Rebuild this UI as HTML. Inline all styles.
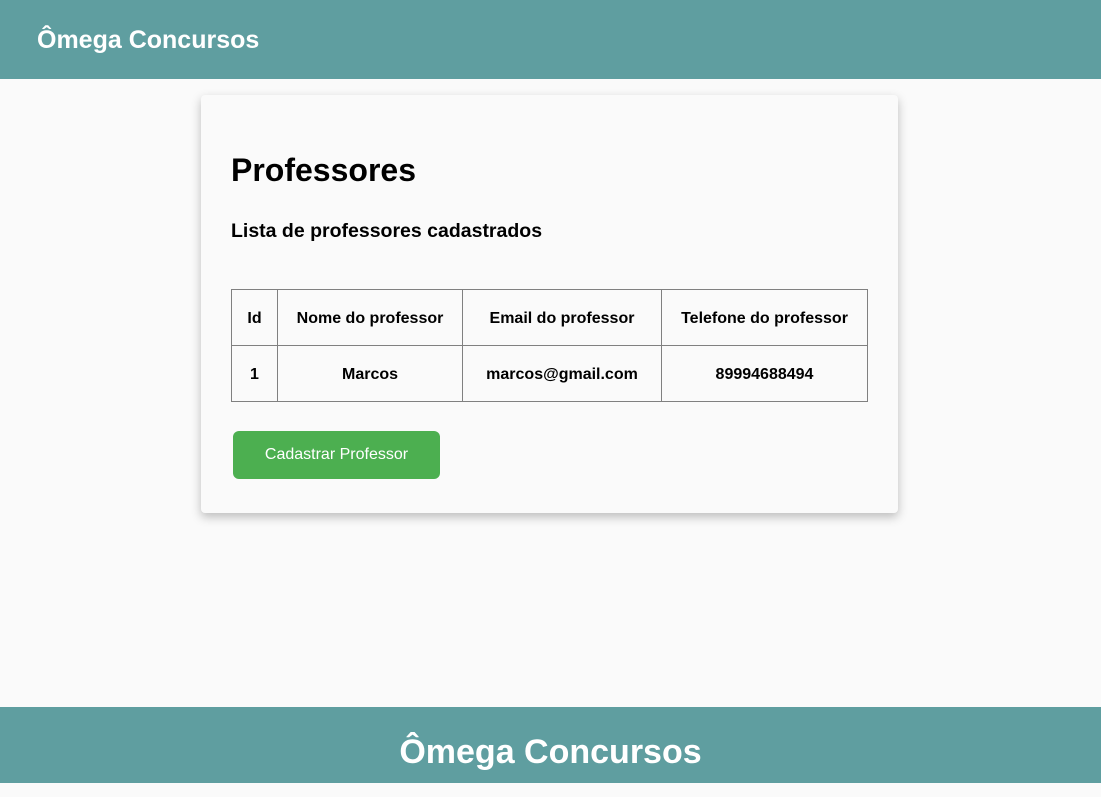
<!DOCTYPE html>
<html><head><style>
body{margin:0;width:1101px;height:783px;background:#fafafa;font-family:"Liberation Sans",sans-serif;position:relative;overflow:hidden}
.hdr{position:absolute;left:0;top:0;width:1101px;height:79px;background:#5f9ea0;color:#fff;font-weight:bold;font-size:25px}
.hdr span{position:absolute;left:37px;top:26px}
.ftr{position:absolute;left:0;top:707px;width:1101px;height:76px;background:#5f9ea0;color:#fff;font-weight:bold;font-size:34px;text-align:center;line-height:90px}
.card{position:absolute;left:201px;top:95px;width:697px;height:418px;background:#fafafa;border-radius:4px;box-shadow:0 4px 10px rgba(0,0,0,0.25)}
h1{position:absolute;left:30px;top:57px;margin:0;font-size:32px;font-weight:bold;color:#000}
h3{position:absolute;left:30px;top:125px;margin:0;font-size:19.5px;font-weight:bold;color:#000}
table{position:absolute;left:30px;top:194px;border-collapse:collapse}
td{border:1px solid #808080;height:55px;text-align:center;font-weight:bold;font-size:16px;padding:2px 0 0 0;box-sizing:border-box}
.btn{position:absolute;left:32px;top:336px;width:207px;height:48px;background:#4caf50;border-radius:6px;color:#fff;font-size:16px;text-align:center;line-height:47px}
</style></head><body>
<div class="hdr"><span>Ômega Concursos</span></div>
<div class="card">
<h1>Professores</h1>
<h3>Lista de professores cadastrados</h3>
<table>
<tr><td style="width:46px;height:56px">Id</td><td style="width:185px">Nome do professor</td><td style="width:199px">Email do professor</td><td style="width:206px">Telefone do professor</td></tr>
<tr><td style="height:56px">1</td><td>Marcos</td><td>marcos@gmail.com</td><td>89994688494</td></tr>
</table>
<div class="btn">Cadastrar Professor</div>
</div>
<div class="ftr">Ômega Concursos</div>
</body></html>
